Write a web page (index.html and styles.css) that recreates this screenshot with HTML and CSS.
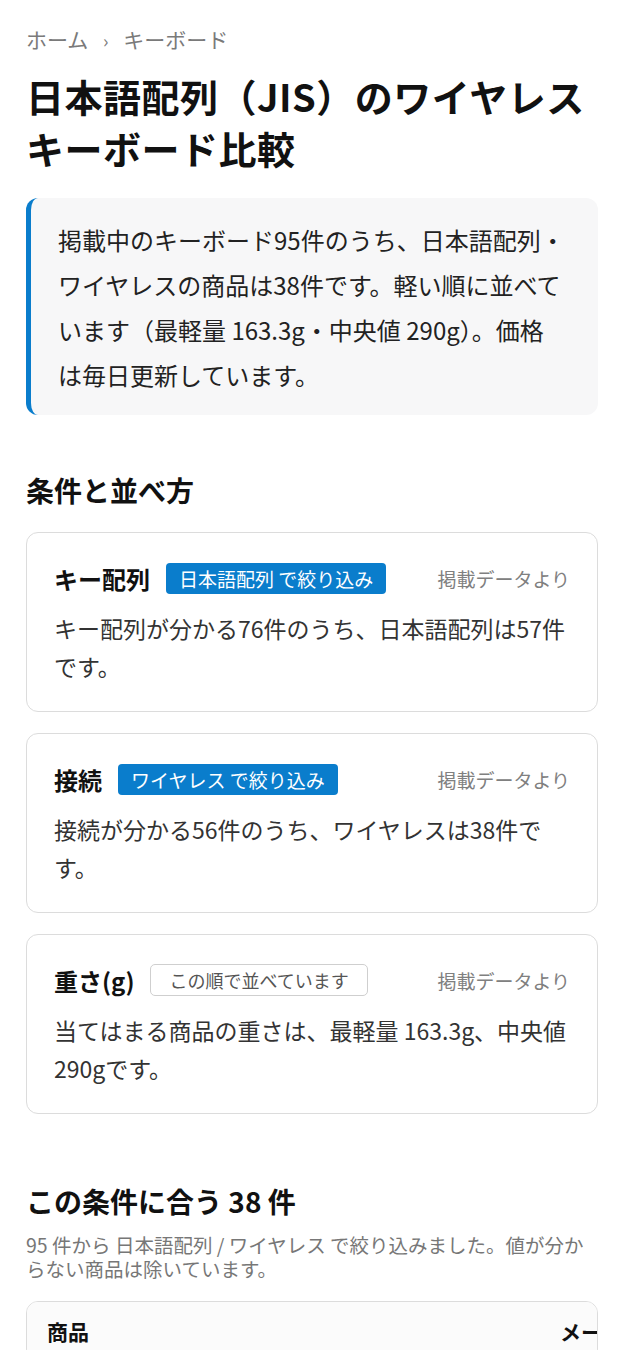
FILE: index.html
```html
<!DOCTYPE html>
<html lang="ja">

<head>
	<meta charset="UTF-8">
	<meta name="viewport" content="width=device-width, initial-scale=1.0">
	<title>日本語配列（JIS）のワイヤレスキーボード比較</title>
	<link rel="stylesheet" href="styles.css">
</head>

<body>
	<nav class="crumbs">
		<a href="#">ホーム</a>
		<span class="sep">›</span>
		<span>キーボード</span>
	</nav>

	<h1 class="title">日本語配列（JIS）のワイヤレスキーボード比較</h1>

	<p class="lead">
		掲載中のキーボード95件のうち、日本語配列・ワイヤレスの商品は38件です。軽い順に並べています（最軽量 163.3g・中央値 290g）。価格は毎日更新しています。
	</p>

	<h2 class="section-title">条件と並べ方</h2>

	<div class="cond">
		<div class="cond-head">
			<span class="cond-name">キー配列</span>
			<span class="tag">日本語配列 で絞り込み</span>
			<span class="src">掲載データより</span>
		</div>
		<p class="cond-text">キー配列が分かる76件のうち、日本語配列は57件です。</p>
	</div>

	<div class="cond">
		<div class="cond-head">
			<span class="cond-name">接続</span>
			<span class="tag">ワイヤレス で絞り込み</span>
			<span class="src">掲載データより</span>
		</div>
		<p class="cond-text">接続が分かる56件のうち、ワイヤレスは38件です。</p>
	</div>

	<div class="cond">
		<div class="cond-head">
			<span class="cond-name">重さ(g)</span>
			<span class="tag tag-sort">この順で並べています</span>
			<span class="src">掲載データより</span>
		</div>
		<p class="cond-text">当てはまる商品の重さは、最軽量 163.3g、中央値 290gです。</p>
	</div>

	<h2 class="section-title results-title">この条件に合う 38 件</h2>
	<p class="note">95 件から 日本語配列 / ワイヤレス で絞り込みました。値が分からない商品は除いています。</p>

	<div class="table-wrap">
		<table class="list">
			<thead>
				<tr>
					<th class="col-name">商品</th>
					<th class="col-maker">メーカー</th>
					<th class="col-num">重さ(g)</th>
					<th class="col-num">価格</th>
				</tr>
			</thead>
		</table>
	</div>
</body>

</html>
```

FILE: styles.css
```css
html {
	font-size: 16px;
}

body {
	margin: 0;
	padding: 23px 26px 0;
	font-family: "Noto Sans CJK JP", "Noto Sans", sans-serif;
	color: #1a1a1a;
	background: #fff;
	overflow: hidden;
}

.crumbs {
	font-size: 21px;
	color: #7a7a7a;
	line-height: 32px;
}

.crumbs a {
	color: inherit;
	text-decoration: none;
}

.crumbs .sep {
	margin: 0 10px;
	font-size: 18px;
}

.title {
	font-size: 38px;
	font-weight: 700;
	line-height: 52px;
	margin: 14px 0 24px;
	letter-spacing: 0.5px;
	color: #111;
}

.lead {
	margin: 0;
	background: #f7f7f8;
	border-left: 5px solid #0a7dcc;
	border-radius: 12px;
	padding: 19px 33px 18px 27px;
	font-size: 24px;
	line-height: 45px;
	color: #222;
}

.section-title {
	font-size: 28px;
	font-weight: 700;
	line-height: 40px;
	margin: 55px 0 22px;
	color: #111;
}

.cond {
	border: 1px solid #dcdcdc;
	border-radius: 12px;
	padding: 27px 27px 26px;
	margin-bottom: 21px;
}

.cond-head {
	display: flex;
	align-items: center;
	height: 36px;
}

.cond-name {
	font-size: 24px;
	font-weight: 700;
	margin-right: 16px;
	color: #111;
}

.tag {
	background: #0a7dcc;
	color: #fff;
	font-size: 19px;
	line-height: 31px;
	padding: 0 13px;
	border-radius: 4px;
}

.tag-sort {
	background: #fff;
	color: #555;
	border: 1.5px solid #cfcfcf;
	border-radius: 5px;
	font-size: 18px;
	line-height: 30px;
	padding: 0 18px;
}

.src {
	margin-left: auto;
	font-size: 19px;
	color: #808080;
}

.cond-text {
	margin: 13px 0 0;
	font-size: 23px;
	line-height: 38px;
	color: #333;
}

.results-title {
	margin: 67px 0 12px;
}

.note {
	margin: 0;
	font-size: 19.5px;
	line-height: 24px;
	color: #777;
}

.table-wrap {
	margin-top: 20px;
	border: 1px solid #dcdcdc;
	border-radius: 12px;
	overflow: hidden;
}

.list {
	border-collapse: collapse;
	table-layout: fixed;
	width: 980px;
}

.list th {
	text-align: left;
	font-size: 21px;
	font-weight: 700;
	line-height: 24px;
	padding: 17px 20px;
	background: #fbfbfb;
	white-space: nowrap;
	color: #111;
}

.list .col-name {
	width: 473px;
}

.list .col-maker {
	width: 140px;
}
```
